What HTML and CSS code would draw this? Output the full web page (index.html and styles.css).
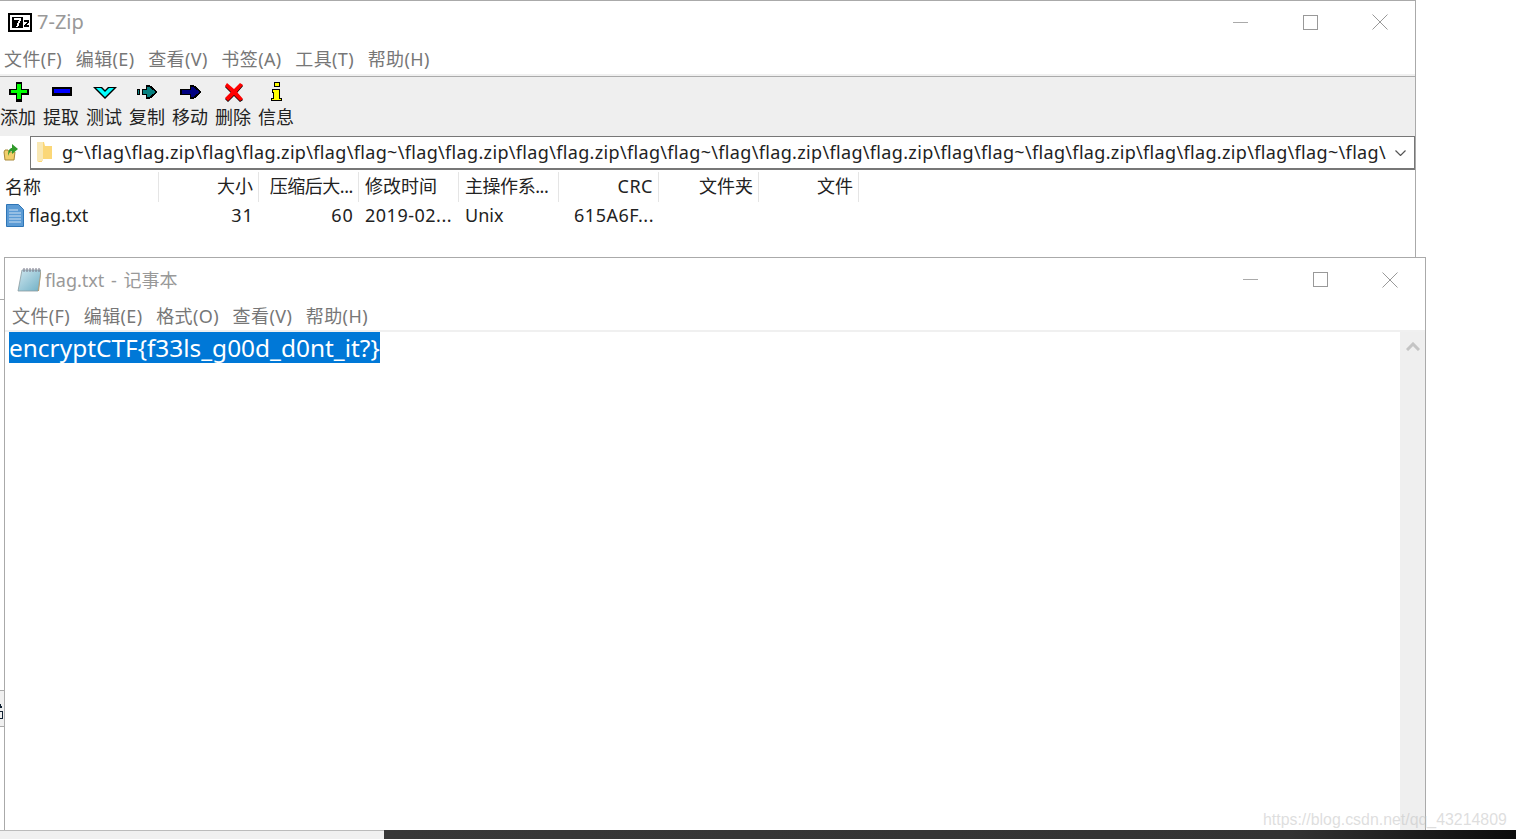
FILE: index.html
```html
<!DOCTYPE html>
<html>

<head>
    <title>flag.txt</title>
    <link rel="stylesheet" href="styles.css">
</head>

<body>
    <div class="desktop">

        <!-- 7-zip window, sits behind notepad -->
        <div class="win zip-win">
            <div class="titlebar">
                <svg class="zip-logo" width="24" height="19" viewBox="0 0 24 19" shape-rendering="crispEdges">
                    <rect width="24" height="19" fill="#000"/>
                    <rect x="2" y="2" width="20" height="15" fill="#fff"/>
                    <rect x="4" y="4" width="11" height="11" fill="#000"/>
                    <path d="M6 5h7v2l-3 7H8l3-7H6z" fill="#fff"/>
                    <path d="M16 7h5v2l-3 3h3v2h-5v-2l3-3h-3z" fill="#000"/>
                </svg>
                <span class="title-text">7-Zip</span>
                <div class="caption">
                    <svg width="15" height="15" viewBox="0 0 15 15"><path d="M0 7.5h15" stroke="#aaa"/></svg>
                    <svg width="15" height="15" viewBox="0 0 15 15"><rect x=".5" y=".5" width="14" height="14" fill="none" stroke="#999"/></svg>
                    <svg width="16" height="16" viewBox="0 0 16 16"><path d="M.5.5l15 15M15.500.5l-15 15" stroke="#999"/></svg>
                </div>
            </div>
            <div class="menubar">
                <span>文件(F)</span><span>编辑(E)</span><span>查看(V)</span><span>书签(A)</span><span>工具(T)</span><span>帮助(H)</span>
            </div>
            <div class="toolbar">
                <div class="tool">
                    <svg width="20" height="20" viewBox="0 0 20 20" shape-rendering="crispEdges"><path d="M7 0h6v7h7v6h-7v7H7v-7H0V7h7z" fill="#000"/><path d="M8 2h4v6h6v3h-6v6H8v-6H2V8h6z" fill="#0f0"/></svg>
                    <span>添加</span>
                </div>
                <div class="tool">
                    <svg width="20" height="20" viewBox="0 0 20 20" shape-rendering="crispEdges"><rect y="5" width="20" height="9" rx="1" fill="#000"/><rect x="2" y="7" width="16" height="4" fill="#00f"/></svg>
                    <span>提取</span>
                </div>
                <div class="tool">
                    <svg width="24" height="20" viewBox="0 0 24 20"><path d="M0 5h9l3 3 3-3h9L12 17z" fill="#000"/><path d="M3 6h5l4 4 4-4h5l-9 9z" fill="#0ff"/></svg>
                    <span>测试</span>
                </div>
                <div class="tool">
                    <svg width="22" height="20" viewBox="0 0 22 20" shape-rendering="crispEdges"><path d="M0 7h3v6H0zM5 7h4V3h3l2 1 2 2 2 2 3 2-3 2-2 2-2 2-2 1H9v-4H5z" fill="#000"/><path d="M1 8h1v4H1zM6 8h4V5h2l2 2 2 1 2 2-2 2-2 1-2 2h-2v-3H6z" fill="#078080"/></svg>
                    <span>复制</span>
                </div>
                <div class="tool">
                    <svg width="22" height="20" viewBox="0 0 22 20" shape-rendering="crispEdges"><path d="M0 7h10V3h3l2 1 2 2 2 2 3 2-3 2-2 2-2 2-2 1h-3v-4H0z" fill="#000"/><path d="M2 8h9V5h2l2 2 2 1 2 2-2 2-2 1-2 2h-2v-3H2z" fill="#000080"/></svg>
                    <span>移动</span>
                </div>
                <div class="tool">
                    <svg width="20" height="20" viewBox="0 0 20 20"><path d="M3 3l7 5 7-6 2 2-6 7 6 7-3 2-6-6-6 6-3-3 6-6-6-6z" fill="#000"/><path d="M3 1l7 6 6-6 3 2-6 7 6 7-3 2-6-6-6 6-3-3 6-6-6-6z" fill="#f00"/></svg>
                    <span>删除</span>
                </div>
                <div class="tool">
                    <svg width="14" height="20" viewBox="0 0 14 20" shape-rendering="crispEdges"><path d="M4 0h6v5H4zM2 7h8v9h2v3H1v-3h2v-5H2z" fill="#000"/><path d="M5 1h4v3H5zM3 8h6v9h2v1H2v-1h2v-7H3z" fill="#ff0"/></svg>
                    <span>信息</span>
                </div>
            </div>
            <div class="addressbar">
                <svg class="up-icon" width="16" height="18" viewBox="0 0 16 18"><path d="M1 9l1-2h3l1 2h6l-1 8H2z" fill="#f2cf6c" stroke="#a98a3a"/><path d="M5 13c0-6 2-8 4-8V1l6 5-6 5V8c-2 0-3 2-4 5z" fill="#2f9a2a"/></svg>
                <div class="pathbox">
                    <svg class="folder-icon" width="15" height="22" viewBox="0 0 15 22"><path d="M0 1h7l1 4h7v13H5v3H2l-2-1z" fill="#fbd777"/><path d="M0 1h6v19H0z" fill="#f9e8b4"/></svg>
                    <span class="path-text">g~\flag\flag.zip\flag\flag.zip\flag\flag~\flag\flag.zip\flag\flag.zip\flag\flag~\flag\flag.zip\flag\flag.zip\flag\flag~\flag\flag.zip\flag\flag.zip\flag\flag~\flag\</span>
                    <svg class="chevron" width="11" height="6" viewBox="0 0 11 6"><path d="M.5.5l5 5 5-5" fill="none" stroke="#555" stroke-width="1.200"/></svg>
                </div>
            </div>
            <div class="list-head">
                <span class="col first">名称</span>
                <span class="col num">大小</span>
                <span class="col num tight">压缩后大...</span>
                <span class="col">修改时间</span>
                <span class="col tight">主操作系...</span>
                <span class="col num wide">CRC</span>
                <span class="col num">文件夹</span>
                <span class="col num">文件</span>
            </div>
            <div class="list-row">
                <span class="col first">
                    <svg width="18" height="23" viewBox="0 0 18 23"><path d="M.5.500h12l5 5v17H.5z" fill="#5b9bd5" stroke="#2e75b6"/><path d="M3 6h9M3 9h12M3 12h12M3 15h12M3 18h12" stroke="#cfe2f3"/></svg>
                    flag.txt
                </span>
                <span class="col num wide more">31</span>
                <span class="col num wide more">60</span>
                <span class="col wide">2019-02...</span>
                <span class="col">Unix</span>
                <span class="col num wide">615A6F...</span>
            </div>
        </div>

        <!-- piece of a window poking out on the left -->
        <div class="side-tab">
            <svg width="4" height="17" viewBox="0 0 4 17" shape-rendering="crispEdges"><path d="M0 1h1v2h1v2H0zM0 8h3v8H0v-1h2V9H0z" fill="#123"/></svg>
        </div>

        <!-- notepad window -->
        <div class="win note-win">
            <div class="titlebar">
                <svg class="note-icon" width="24" height="25" viewBox="0 0 24 25">
                    <defs>
                        <linearGradient id="pad" x1="0" y1="0" x2="1" y2="1">
                            <stop offset="0" stop-color="#cfe6ee"/>
                            <stop offset="1" stop-color="#6fb0c6"/>
                        </linearGradient>
                    </defs>
                    <path d="M5 3h19l-3 21H1z" fill="url(#pad)" stroke="#8a9aa0" stroke-width=".8"/>
                    <path d="M7 1v4M10 1v4M13 1v4M16 1v4M19 1v4M22 1v4" stroke="#778"/>
                    <path d="M21 24l3-21v3l-2 18z" fill="#b59a66"/>
                </svg>
                <span class="title-text">flag.txt - 记事本</span>
                <div class="caption">
                    <svg width="15" height="15" viewBox="0 0 15 15"><path d="M0 7.5h15" stroke="#aaa"/></svg>
                    <svg width="15" height="15" viewBox="0 0 15 15"><rect x=".5" y=".5" width="14" height="14" fill="none" stroke="#999"/></svg>
                    <svg width="16" height="16" viewBox="0 0 16 16"><path d="M.5.5l15 15M15.500.5l-15 15" stroke="#999"/></svg>
                </div>
            </div>
            <div class="menubar">
                <span>文件(F)</span><span>编辑(E)</span><span>格式(O)</span><span>查看(V)</span><span>帮助(H)</span>
            </div>
            <div class="note-body">
                <div class="editor"><span class="selected">encryptCTF{f33ls_g00d_d0nt_it?}</span></div>
                <div class="scrollbar">
                    <svg width="14" height="9" viewBox="0 0 14 9"><path d="M1 8l6-6 6 6" fill="none" stroke="#c4c4c4" stroke-width="3"/></svg>
                </div>
            </div>
        </div>

        <div class="watermark">https://blog.csdn.net/qq_43214809</div>
    </div>

    <div class="bottom">
        <div class="bottom-left"></div>
        <div class="bottom-right"></div>
    </div>
</body>

</html>
```

FILE: styles.css
```css
html,
body {
    margin: 0;
    padding: 0;
    height: 839px;
    overflow: hidden;
    background-color: white;
}

body {
    font-family: "Noto Sans", "Noto Sans CJK SC", sans-serif;
    font-size: 18px;
    color: #222;
    display: flex;
    flex-direction: column;
}

.desktop {
    position: relative;
    height: 830px;
    flex: none;
}

.win {
    position: absolute;
    background-color: white;
    box-sizing: border-box;
    border: solid 1px #aaa;
}

.zip-win {
    left: -1px;
    top: 0;
    width: 1417px;
    height: 300px;
}

.note-win {
    left: 4px;
    top: 257px;
    width: 1422px;
    height: 573px;
    border-bottom: none;
    display: flex;
    flex-direction: column;
}

/* title + menu */

.titlebar {
    display: flex;
    align-items: center;
    color: #999;
    font-size: 20px;
}

.zip-win .titlebar {
    height: 43px;
    padding-left: 8px;
}

.note-win .titlebar {
    height: 44px;
    padding-left: 12px;
    font-size: 18px;
}

.title-text {
    margin-top: -3px;
    white-space: pre;
    word-spacing: 2px;
}

.zip-logo {
    margin-right: 5px;
}

.note-icon {
    margin-right: 4px;
    margin-top: -1px;
}

.caption {
    margin-left: auto;
    width: 182px;
    margin-top: -1px;
    display: flex;
    justify-content: space-between;
    align-items: center;
    padding-right: 27px;
    box-sizing: border-box;
}

.menubar {
    display: flex;
    gap: 13.6px;
    letter-spacing: 0.4px;
    color: #777;
    line-height: 28px;
    height: 28px;
}

.zip-win .menubar {
    padding-left: 4px;
    height: 30px;
    line-height: 31px;
    border-bottom: solid 2px #f0f0f0;
}

.note-win .menubar {
    padding-left: 7px;
}

/* 7-zip toolbar */

.toolbar {
    height: 60px;
    box-sizing: border-box;
    border-top: solid 1px #aaa;
    background-color: #efefef;
    display: flex;
    gap: 7px;
    padding-top: 5px;
}

.tool {
    width: 36px;
    display: flex;
    flex-direction: column;
    align-items: center;
}

.tool svg {
    margin-left: 2px;
}

.tool span {
    line-height: 26px;
    height: 26px;
    margin-top: 2px;
    color: #222;
}

/* address line */

.addressbar {
    height: 34px;
    display: flex;
    align-items: center;
}

.up-icon {
    margin-left: 3px;
    margin-right: 11px;
    margin-top: -2px;
    flex: none;
}

.pathbox {
    flex: 1;
    min-width: 0;
    height: 34px;
    box-sizing: border-box;
    border: solid 1px #777;
    border-bottom-width: 2px;
    display: flex;
    align-items: center;
    padding-left: 6px;
    padding-bottom: 2px;
}

.folder-icon {
    flex: none;
    margin-right: 10px;
}

.path-text {
    flex: 1;
    min-width: 0;
    overflow: hidden;
    white-space: nowrap;
    letter-spacing: 0.337px;
}

.chevron {
    flex: none;
    margin: 2px 8px 0 8px;
}

/* file list */

.list-head,
.list-row {
    display: grid;
    grid-template-columns: 159px repeat(7, 100px);
    align-items: center;
}

.list-head {
    height: 30px;
    margin-top: 2px;
}

.list-head .col {
    border-right: solid 1px #e5e5e5;
    height: 30px;
    line-height: 28px;
}

.list-row {
    height: 26px;
}

.col {
    box-sizing: border-box;
    padding: 0 5px 0 6px;
    white-space: nowrap;
}

.col.first {
    padding-left: 6px;
    display: flex;
    align-items: center;
    gap: 5px;
}

.list-head .col.first {
    padding-left: 5px;
}

.col.num {
    text-align: right;
}

.col.tight {
    letter-spacing: -0.45px;
}

.col.wide {
    letter-spacing: 0.5px;
}

.col.wide.more {
    letter-spacing: 0.8px;
    padding-right: 5.5px;
}

.side-tab {
    position: absolute;
    left: 0;
    top: 690px;
    width: 4px;
    height: 25px;
    background-color: #f0f0f0;
    border-top: solid 1px #aaa;
    border-bottom: solid 1px #aaa;
    padding-top: 10px;
}

/* notepad */

.note-body {
    flex: 1;
    display: flex;
    min-height: 0;
    border-top: solid 2px #f0f0f0;
}

.editor {
    flex: 1;
    padding-left: 4px;
    font-size: 24.43px;
    line-height: 31px;
    color: black;
}

.selected {
    display: inline-block;
    background-color: #0078d7;
    color: white;
    white-space: nowrap;
}

.scrollbar {
    width: 25px;
    background-color: #efefef;
    display: flex;
    justify-content: center;
    padding-top: 10px;
    box-sizing: border-box;
    align-items: flex-start;
}

.watermark {
    position: absolute;
    left: 1263px;
    top: 809px;
    font-family: "Liberation Sans", sans-serif;
    font-size: 15.9px;
    line-height: 22px;
    color: rgba(190, 190, 190, 0.5);
    white-space: nowrap;
}

/* strip of the page underneath */

.bottom {
    display: flex;
    height: 9px;
    flex: none;
}

.bottom-left {
    width: 384px;
    background-color: #f0f0f0;
    border-top: solid 1px #bbb;
    box-sizing: border-box;
}

.bottom-right {
    flex: 1;
    background: linear-gradient(to right, #383838, #333 80%, #0c0c0c 100%);
}
```
